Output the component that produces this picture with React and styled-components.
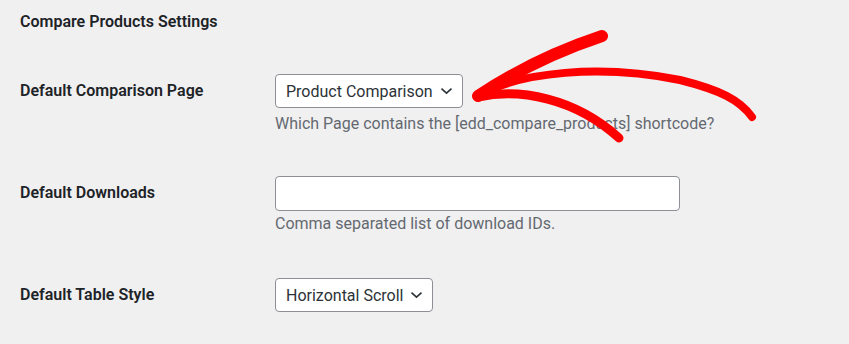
import React from "react";
import styled, { createGlobalStyle } from "styled-components";

const GlobalStyle = createGlobalStyle`
  html, body {
    margin: 0;
    padding: 0;
    background: #f0f0f1;
  }
  body {
    font-family: Roboto, "Liberation Sans", sans-serif;
    color: #1d2327;
  }
`;

const Page = styled.div`
  position: relative;
  width: 849px;
  height: 344px;
  padding: 11px 20px 0;
  box-sizing: border-box;
  overflow: hidden;
`;

const Heading = styled.h2`
  margin: 0;
  font-size: 16px;
  line-height: 22px;
  font-weight: 600;
`;

const Row = styled.div`
  display: grid;
  grid-template-columns: 255px 1fr;
  align-items: start;
  margin-top: ${props => props.top}px;
`;

const Label = styled.div`
  font-size: 16px;
  font-weight: 600;
  line-height: 34px;
`;

const Field = styled.div`
  display: flex;
  flex-direction: column;
  align-items: flex-start;
`;

const Select = styled.div`
  display: flex;
  align-items: center;
  justify-content: space-between;
  width: ${props => props.width}px;
  height: 34px;
  box-sizing: border-box;
  padding: 0 9px 0 10px;
  background: #fff;
  border: 1px solid #8c8f94;
  border-radius: 4px;
  font-size: 16px;
  color: #2c3338;
  svg {
    flex: none;
  }
`;

const TextInput = styled.input`
  width: 405px;
  height: 35px;
  box-sizing: border-box;
  background: #fff;
  border: 1px solid #8c8f94;
  border-radius: 4px;
  font: inherit;
  font-size: 16px;
  margin: 0;
`;

const Description = styled.p`
  margin: ${props => props.gap}px 0 0;
  font-size: 16px;
  line-height: 20px;
  color: #646970;
`;

const Arrow = styled.svg`
  position: absolute;
  left: 0;
  top: 0;
  pointer-events: none;
`;

const Chevron = () => (
  <svg width="13" height="8" viewBox="0 0 13 8">
    <path d="M1.5 1.6 L6.5 6.2 L11.5 1.6" fill="none" stroke="#2c3338" strokeWidth="1.6" />
  </svg>
);

export default function App() {
  return (
    <>
      <GlobalStyle />
      <Page>
        <Heading>Compare Products Settings</Heading>

        <Row top={41}>
          <Label>Default Comparison Page</Label>
          <Field>
            <Select width={188}>
              Product Comparison <Chevron />
            </Select>
            <Description gap={6}>
              Which Page contains the [edd_compare_products] shortcode?
            </Description>
          </Field>
        </Row>

        <Row top={42}>
          <Label>Default Downloads</Label>
          <Field>
            <TextInput type="text" />
            <Description gap={3}>Comma separated list of download IDs.</Description>
          </Field>
        </Row>

        <Row top={44}>
          <Label>Default Table Style</Label>
          <Field>
            <Select width={158}>
              Horizontal Scroll <Chevron />
            </Select>
          </Field>
        </Row>

        <Arrow width="849" height="344" viewBox="0 0 849 344">
          <g fill="none" stroke="#ff0000" strokeLinecap="round" strokeLinejoin="round">
            <path d="M478 96 C 505 78, 545 55, 602 36" strokeWidth="12" />
            <path d="M480 95 C 520 72, 600 64, 680 80 C 720 90, 740 100, 752 117" strokeWidth="8" />
            <path d="M478 97 C 520 88, 575 98, 619 138" strokeWidth="9" />
          </g>
        </Arrow>
      </Page>
    </>
  );
}
